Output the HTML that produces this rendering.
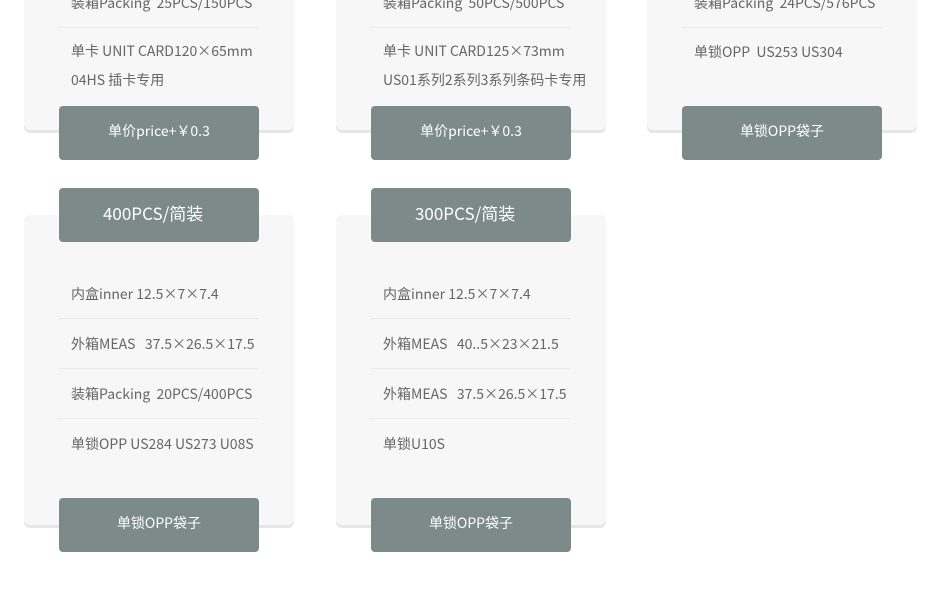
<!DOCTYPE html>
<html><head><meta charset="utf-8"><style>
*{margin:0;padding:0;box-sizing:border-box}
body{width:950px;height:595px;background:#fff;position:relative;overflow:hidden;font-family:"Noto Sans CJK SC","Liberation Sans",sans-serif;color:#666;font-size:14px}
.card{position:absolute;width:270px;background:#f7f7f7;border-radius:6px;box-shadow:0 3px 0 #e6e6e6}
.btn{position:absolute;width:200px;height:54px;background:#7d8a8a;border-radius:4px;color:#fff;font-size:14px;text-align:center;line-height:50px}
.hd{font-size:17px;text-align:left;padding-left:44px}
.t{position:absolute;left:12px;white-space:nowrap;line-height:29px}
.r{position:absolute;width:200px;height:50px;border-bottom:1px solid #eaeaea}
.r span{position:absolute;left:12px;top:0;line-height:50px;white-space:nowrap}
.r.n{border-bottom:none}
</style></head><body>

<div class="card" style="left:24px;top:-20px;height:150px"></div>
<div class="card" style="left:336px;top:-20px;height:150px"></div>
<div class="card" style="left:647px;top:-20px;height:150px"></div>

<div class="r" style="left:59px;top:-22px"><span>装箱Packing&nbsp;&nbsp;25PCS/150PCS</span></div>
<div style="position:absolute;left:59px;top:37px"><div class="t" style="top:0">单卡 UNIT CARD120×65mm</div><div class="t" style="top:29px">04HS 插卡专用</div></div>
<div class="btn" style="left:59px;top:106px">单价price+￥0.3</div>

<div class="r" style="left:371px;top:-22px"><span>装箱Packing&nbsp;&nbsp;50PCS/500PCS</span></div>
<div style="position:absolute;left:371px;top:37px"><div class="t" style="top:0">单卡 UNIT CARD125×73mm</div><div class="t" style="top:29px">US01系列2系列3系列条码卡专用</div></div>
<div class="btn" style="left:371px;top:106px">单价price+￥0.3</div>

<div class="r" style="left:682px;top:-22px"><span>装箱Packing&nbsp;&nbsp;24PCS/576PCS</span></div>
<div class="r n" style="left:682px;top:27px"><span>单锁OPP&nbsp;&nbsp;US253 US304</span></div>
<div class="btn" style="left:682px;top:106px">单锁OPP袋子</div>

<div class="card" style="left:24px;top:215px;height:310px"></div>
<div class="card" style="left:336px;top:215px;height:310px"></div>

<div class="btn hd" style="left:59px;top:188px">400PCS/简装</div>
<div class="r" style="left:59px;top:269px"><span>内盒inner 12.5×7×7.4</span></div>
<div class="r" style="left:59px;top:319px"><span>外箱MEAS&nbsp;&nbsp;&nbsp;37.5×26.5×17.5</span></div>
<div class="r" style="left:59px;top:369px"><span>装箱Packing&nbsp;&nbsp;20PCS/400PCS</span></div>
<div class="r n" style="left:59px;top:419px"><span>单锁OPP US284 US273 U08S</span></div>
<div class="btn" style="left:59px;top:498px">单锁OPP袋子</div>

<div class="btn hd" style="left:371px;top:188px">300PCS/简装</div>
<div class="r" style="left:371px;top:269px"><span>内盒inner 12.5×7×7.4</span></div>
<div class="r" style="left:371px;top:319px"><span>外箱MEAS&nbsp;&nbsp;&nbsp;40..5×23×21.5</span></div>
<div class="r" style="left:371px;top:369px"><span>外箱MEAS&nbsp;&nbsp;&nbsp;37.5×26.5×17.5</span></div>
<div class="r n" style="left:371px;top:419px"><span>单锁U10S</span></div>
<div class="btn" style="left:371px;top:498px">单锁OPP袋子</div>

</body></html>
